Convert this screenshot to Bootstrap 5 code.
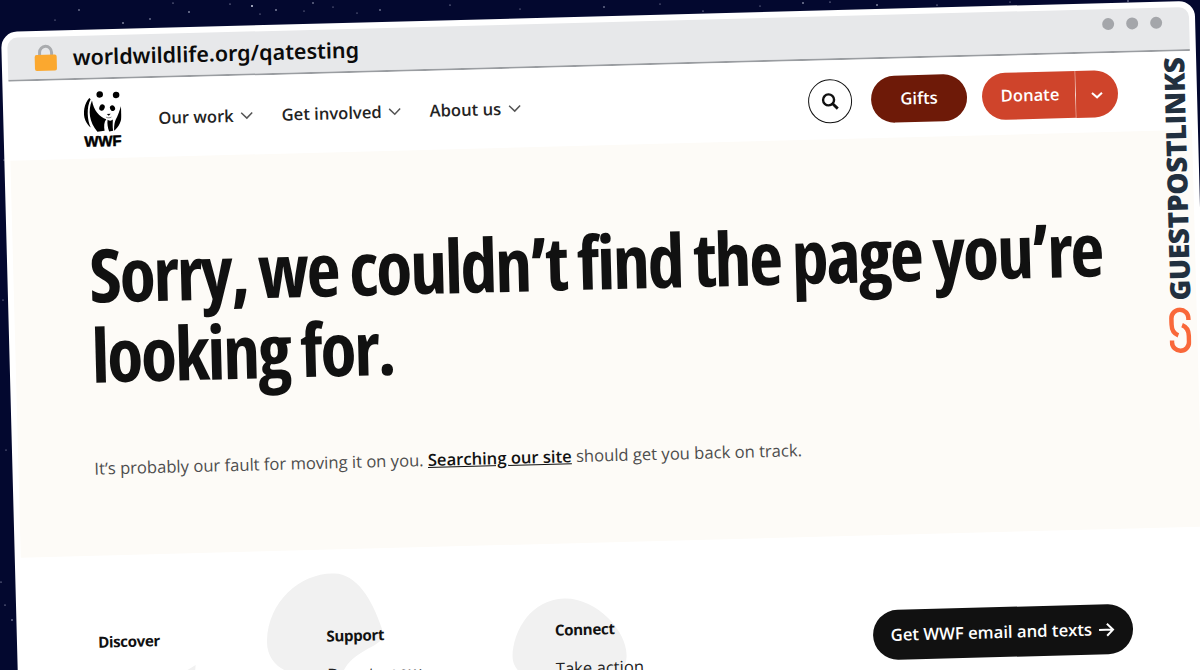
<!DOCTYPE html>
<html lang="en">
<head>
    <meta charset="UTF-8">
    <meta name="viewport" content="width=device-width, initial-scale=1.0">
    <title>World Wildlife Fund - page not found</title>
    <link rel="stylesheet" href="https://cdn.jsdelivr.net/npm/bootstrap@5.3.0/dist/css/bootstrap.min.css">
    <style>
        html, body {
            height: 670px;
            overflow: hidden;
        }

        body {
            background-color: #03082f;
            font-family: "Open Sans", "Noto Sans", sans-serif;
            color: #111;
        }

        .star-field {
            position: absolute;
            left: 0;
            top: 0;
        }

        .browser-tilt {
            position: relative;
            width: 1194px;
            height: 800px;
            margin: 32px 0 0 1px;
            padding: 6px 6px 0;
            background-color: #fff;
            border-radius: 16px 16px 0 0;
            transform: rotate(-1.5deg);
            transform-origin: 0 0;
        }

        .url-bar {
            height: 44px;
            padding: 0 27px 0 26px;
            background-color: #e7e8ea;
            border-bottom: 2px solid #9a9da1;
            border-radius: 10px 10px 0 0;
        }

        .url-text {
            margin-left: 15px;
            font-family: "Noto Sans", sans-serif;
            font-size: 21.5px;
            font-weight: 600;
            color: #0b0b0b;
        }

        .traffic-dot {
            width: 12px;
            height: 12px;
            border-radius: 50%;
            background-color: #a4a6aa;
        }

        .dot-row {
            gap: 12px;
            margin-bottom: 12px;
        }

        .site-nav {
            height: 79px;
            padding: 2px 73px 0 74px;
        }

        .wwf-logo {
            width: 38px;
            margin-right: 37px;
            margin-bottom: 1px;
            text-align: center;
        }

        .wwf-logo svg {
            display: block;
            width: 38px;
            height: 42px;
        }

        .wwf-word {
            display: block;
            margin-top: 2px;
            font-family: "Liberation Sans", sans-serif;
            font-size: 15px;
            font-weight: 700;
            line-height: 14px;
            letter-spacing: -0.2px;
            -webkit-text-stroke: 0.5px #000;
            color: #000;
        }

        .menu-item {
            gap: 7px;
            margin-right: 28px;
            font-size: 16.6px;
            font-weight: 600;
            color: #232323;
            text-decoration: none;
        }

        .search-round {
            width: 44px;
            height: 44px;
            margin-right: 19px;
            padding: 0;
            border: 1px solid #111;
            background-color: #fff;
        }

        .pill-action {
            height: 47px;
            font-size: 16.6px;
            font-weight: 600;
            color: #fff;
            border: 0;
        }

        .pill-gifts {
            width: 96px;
            margin-right: 15px;
            background-color: #6e1a08;
        }

        .pill-donate {
            width: 94px;
            padding-left: 14px;
            background-color: #cf442b;
        }

        .pill-caret {
            width: 43px;
            padding: 0;
            background-color: #cf442b;
            border-left: 1px solid #f2d4cc !important;
        }

        .hero-panel {
            height: 397px;
            padding: 76px 60px 0 76px;
            background-color: #fdfbf7;
        }

        .hero-title {
            margin: 0;
            font-size: 74px;
            font-weight: 700;
            font-stretch: 75%;
            line-height: 80px;
            letter-spacing: -2.3px;
            color: #111;
        }

        .hero-text {
            margin: 60px 0 0;
            font-size: 16.6px;
            line-height: 27px;
            color: #4d4d4d;
        }

        .hero-text a {
            font-weight: 600;
            color: #111;
        }

        .site-footer {
            position: relative;
            padding: 75px 72px 0 75px;
        }

        .footer-blobs {
            position: absolute;
            left: 0;
            top: 0;
        }

        .footer-col {
            position: relative;
            width: 228.5px;
        }

        .footer-head {
            margin: 0 0 16px;
            font-size: 15.2px;
            font-weight: 700;
            line-height: 22px;
            letter-spacing: -0.4px;
            color: #111;
        }

        .footer-link {
            font-size: 16.6px;
            line-height: 24px;
            color: #222;
            text-decoration: none;
        }

        .cta-black {
            position: relative;
            height: 50px;
            gap: 6px;
            padding: 0 18px;
            font-size: 16.7px;
            font-weight: 600;
            color: #fff;
            background-color: #111;
            border: 0;
        }

        .post-mark {
            position: absolute;
            left: 1159px;
            top: 56px;
            color: #22303f;
        }

        .post-word {
            writing-mode: vertical-rl;
            transform: rotate(180deg);
            font-size: 28px;
            font-weight: 800;
            line-height: 24px;
            letter-spacing: -0.3px;
        }

        .post-chain {
            margin-top: 7px;
        }
    </style>
</head>
<body>
    <svg class="star-field" width="1200" height="670" fill="#cfd3e6">
        <circle cx="79" cy="10" r="0.7"/><circle cx="55" cy="20" r="0.5"/><circle cx="123" cy="23" r="0.8"/>
        <circle cx="150" cy="19" r="0.7"/><circle cx="173" cy="3" r="0.6"/><circle cx="189" cy="12" r="0.8"/>
        <circle cx="230" cy="4" r="0.6"/><circle cx="252" cy="6" r="1"/><circle cx="260" cy="14" r="0.5"/>
        <circle cx="276" cy="10" r="0.8"/><circle cx="304" cy="11" r="0.5"/><circle cx="313" cy="3" r="0.7"/>
        <circle cx="333" cy="7" r="0.5"/><circle cx="357" cy="13" r="0.5"/><circle cx="380" cy="10" r="0.7"/>
        <circle cx="450" cy="5" r="0.6"/><circle cx="520" cy="9" r="0.5"/><circle cx="604" cy="7" r="0.7"/>
        <circle cx="660" cy="4" r="0.5"/><circle cx="703" cy="11" r="0.6"/><circle cx="760" cy="6" r="0.5"/>
        <circle cx="803" cy="3" r="0.8"/><circle cx="830" cy="2" r="0.6"/><circle cx="877" cy="5" r="0.8"/>
        <circle cx="937" cy="5" r="0.6"/><circle cx="1010" cy="2" r="0.5"/><circle cx="1128" cy="1" r="0.7"/>
        <circle cx="1" cy="582" r="0.6"/><circle cx="5" cy="605" r="0.6"/><circle cx="12" cy="620" r="0.7"/>
        <circle cx="6" cy="450" r="0.5"/><circle cx="3" cy="300" r="0.5"/><circle cx="4" cy="160" r="0.5"/>
    </svg>

    <div class="browser-tilt">
        <div class="url-bar d-flex align-items-center">
            <svg width="24" height="28" viewBox="0 0 24 28">
                <path d="M6 14V8.500a6 6 0 0 1 12 0V14" fill="none" stroke="#a9abae" stroke-width="3"/>
                <rect x="1" y="11" width="22" height="16" rx="2" fill="#fba82f"/>
            </svg>
            <span class="url-text">worldwildlife.org/qatesting</span>
            <div class="dot-row d-flex ms-auto">
                <span class="traffic-dot"></span><span class="traffic-dot"></span><span class="traffic-dot"></span>
            </div>
        </div>

        <nav class="site-nav d-flex align-items-center">
            <a class="wwf-logo text-decoration-none" href="#">
                <svg viewBox="10 10 116 128" fill="#000">
                    <circle cx="62" cy="22" r="10"/>
                    <circle cx="112" cy="25" r="10"/>
                    <path d="M30 32C14 48 8 78 16 100c4 10 10 18 16 22-10-22-12-62 2-86z"/>
                    <path d="M38 40C24 70 28 106 52 136l22-3c-2-14-1-27 6-35C60 92 42 70 38 40z"/>
                    <path d="M84 100c-2 12 0 25 4 36l12-2c-2-12 0-26 0-34-4 4-10 4-16 0z"/>
                    <path d="M128 54c4 32-2 64-25 80 0-14 2-26 6-34 6-10 12-25 19-46z"/>
                    <ellipse cx="68" cy="62" rx="8" ry="10" transform="rotate(25 68 62)"/>
                    <ellipse cx="100" cy="65" rx="7.500" ry="9" transform="rotate(-25 100 65)"/>
                    <path d="M82 82h12l-6 6z"/>
                    <path d="M80 92c5 3 11 3 16 0" fill="none" stroke="#000" stroke-width="1.500"/>
                </svg>
                <span class="wwf-word">WWF</span>
            </a>
            <a class="menu-item d-flex align-items-center" href="#">Our work
                <svg width="13" height="8" viewBox="0 0 13 8"><path d="M1 1l5.500 5.500L12 1" fill="none" stroke="#555" stroke-width="1.500"/></svg>
            </a>
            <a class="menu-item d-flex align-items-center" href="#">Get involved
                <svg width="13" height="8" viewBox="0 0 13 8"><path d="M1 1l5.500 5.500L12 1" fill="none" stroke="#555" stroke-width="1.500"/></svg>
            </a>
            <a class="menu-item d-flex align-items-center" href="#">About us
                <svg width="13" height="8" viewBox="0 0 13 8"><path d="M1 1l5.500 5.500L12 1" fill="none" stroke="#555" stroke-width="1.500"/></svg>
            </a>
            <button class="search-round btn rounded-circle ms-auto d-flex align-items-center justify-content-center">
                <svg width="18" height="18" viewBox="0 0 18 18"><circle cx="7.500" cy="7.500" r="5.500" fill="none" stroke="#111" stroke-width="2.400"/><path d="M11.500 11.500L16.500 16.500" stroke="#111" stroke-width="2.800"/></svg>
            </button>
            <button class="pill-action pill-gifts btn rounded-pill">Gifts</button>
            <div class="btn-group">
                <button class="pill-action pill-donate btn rounded-start-pill">Donate</button>
                <button class="pill-action pill-caret btn rounded-end-pill">
                    <svg width="12" height="8" viewBox="0 0 12 8"><path d="M1 1.500l5 4.500 5-4.500" fill="none" stroke="#fff" stroke-width="2"/></svg>
                </button>
            </div>
        </nav>

        <section class="hero-panel">
            <h1 class="hero-title">Sorry, we couldn’t find the page you’re looking for.</h1>
            <p class="hero-text">It’s probably our fault for moving it on you. <a href="#">Searching our site</a> should get you back on track.</p>
        </section>

        <footer class="site-footer d-flex">
            <svg class="footer-blobs" width="700" height="200" fill="#f1f1f1">
                <path d="M313 24C280 22 246 50 244 89c-1 16 8 26 18 31 23 15 48 15 58 1 5-8 10-13 25-21 13-6 17-10 14-20-9-30-24-55-46-56z"/>
                <path d="M542 55c-32 0-52 30-53 57-1 38 111 48 114 3 2-25-28-60-61-60z"/>
                <path d="M172 112l-32 18h30z"/>
            </svg>
            <div class="footer-col">
                <h2 class="footer-head">Discover</h2>
            </div>
            <div class="footer-col">
                <h2 class="footer-head">Support</h2>
                <a class="footer-link" href="#">Donate now</a>
            </div>
            <div class="footer-col">
                <h2 class="footer-head">Connect</h2>
                <a class="footer-link" href="#">Take action</a>
            </div>
            <button class="cta-black btn rounded-pill d-flex align-items-center ms-auto">Get WWF email and texts
                <svg width="17" height="15" viewBox="0 0 17 15"><path d="M1 7.500h14M9 1.500l6 6-6 6" fill="none" stroke="#fff" stroke-width="2"/></svg>
            </button>
        </footer>

        <div class="post-mark d-flex flex-column align-items-center">
            <span class="post-word">GUESTPOSTLINKS</span>
            <svg class="post-chain" width="22" height="46" viewBox="0 0 22 46" fill="none" stroke="#f9683a" stroke-width="4.500">
                <path d="M9 28C4 26 2.500 22 2.500 17v-6a8.500 8.500 0 0 1 17 0v2"/>
                <path d="M13 18c5 2 6.500 6 6.500 11v6a8.500 8.500 0 0 1-17 0v-2"/>
            </svg>
        </div>
    </div>
</body>
</html>
